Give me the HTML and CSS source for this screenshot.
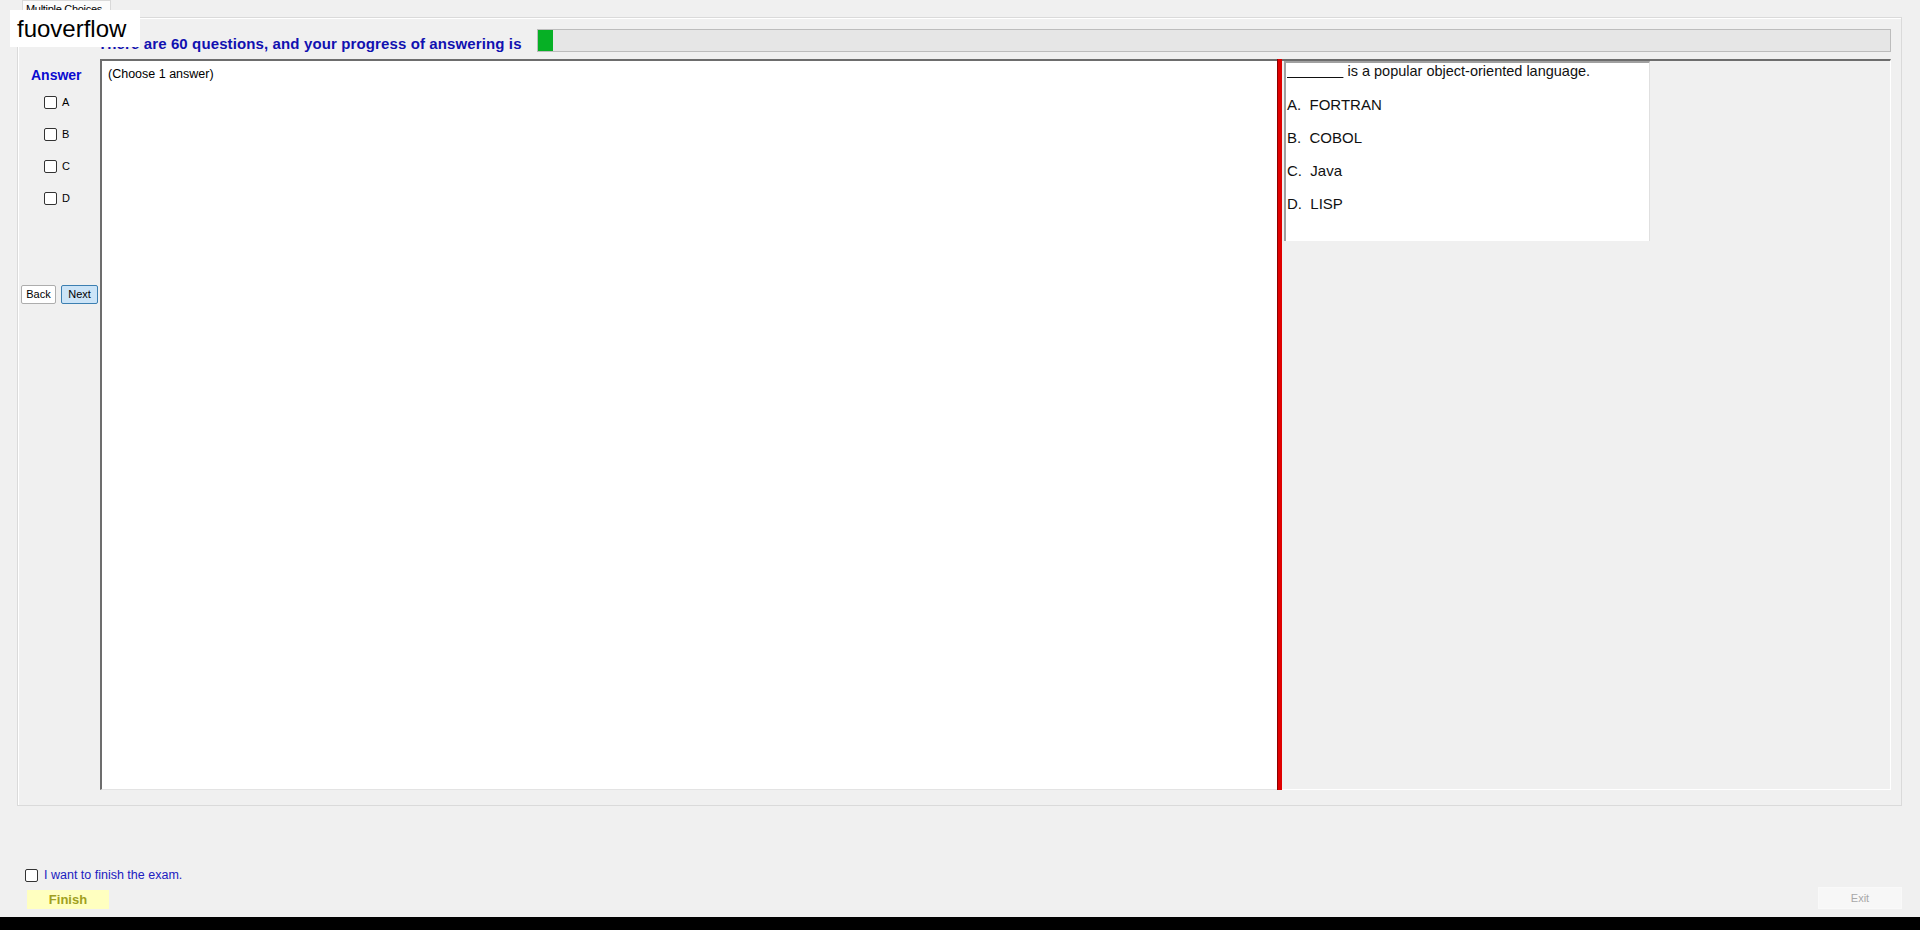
FILE: index.html
```html
<html>
<head>
<title>Multiple Choices</title>
<link rel="stylesheet" href="styles.css">
</head>
<body>
<div class="screen">
<div class="app">
  <div class="tabs"><span class="tab">Multiple Choices</span></div>
  <div class="tabpage">
    <div class="header">
      <div class="title">There are 60 questions, and your progress of answering is</div>
      <div class="progress"><div class="progress-fill" style="width:15px"></div></div>
    </div>
    <div class="body">
      <div class="answers">
        <div class="answer-label">Answer</div>
        <label class="opt"><span class="box"></span>A</label>
        <label class="opt"><span class="box"></span>B</label>
        <label class="opt"><span class="box"></span>C</label>
        <label class="opt"><span class="box"></span>D</label>
        <div class="nav">
          <span class="btn back">Back</span>
          <span class="btn next">Next</span>
        </div>
      </div>
      <div class="qpanel">(Choose 1 answer)</div>
      <div class="splitter"></div>
      <div class="rpanel">
        <div class="qbox">
          <p class="stem"><u>&nbsp;&nbsp;&nbsp;&nbsp;&nbsp;&nbsp;&nbsp;&nbsp;&nbsp;&nbsp;&nbsp;&nbsp;&nbsp;&nbsp;</u> is a popular object-oriented language.</p>
          <p>A.&nbsp; FORTRAN</p>
          <p>B.&nbsp; COBOL</p>
          <p>C.&nbsp; Java</p>
          <p>D.&nbsp; LISP</p>
        </div>
      </div>
    </div>
  </div>
  <div class="footer">
    <div class="finish-col">
      <label class="finish-check"><span class="box"></span>I want to finish the exam.</label>
      <span class="finish">Finish</span>
    </div>
    <span class="exit">Exit</span>
  </div>
  <div class="logo">fuoverflow</div>
</div>
<div class="taskbar"></div>
</div>
</body>
</html>
```

FILE: styles.css
```css
body { margin:0; background:#f0f0f0; font-family:"Liberation Sans", Arial, sans-serif; color:#000; }
.screen { width:1920px; height:930px; display:flex; flex-direction:column; overflow:hidden; }
.app { height:917px; position:relative; display:flex; flex-direction:column; }
.taskbar { height:13px; background:#000; }

.tabs { height:17px; padding-left:22px; display:flex; }
.tab { font-size:11px; line-height:16px; padding:0 3px 0 3px; width:81px; border:1px solid #d9d9d9; border-bottom:none; background:#fbfbfb; color:#000; letter-spacing:-0.3px; }

.tabpage { margin-left:17px; width:1883px; height:776px; border:1px solid #dadada; box-shadow:inset 1px 1px 0 #fff; background:#f0f0f0; padding-top:11px; }
.header { display:flex; height:23px; }
.title { width:439px; padding-left:80px; font-size:15px; letter-spacing:0.12px; font-weight:bold; color:#1111b0; line-height:30px; white-space:nowrap; }
.progress { width:1352px; height:21px; border:1px solid #bcbcbc; background:#e6e6e6; }
.progress-fill { height:21px; background:#06b025; }

.body { display:flex; height:731px; margin-top:7px; }
.answers { width:82px; display:flex; flex-direction:column; }
.answer-label { font-size:14px; font-weight:bold; color:#0a0ad0; padding:8px 0 0 13px; height:18px; }
.opt { display:flex; align-items:center; height:32px; padding-left:26px; font-size:11px; gap:5px; }
.opt:first-of-type { margin-top:1px; }
.box { width:11px; height:11px; border:1px solid #333; border-radius:2px; background:#fff; display:inline-block; }
.nav { display:flex; gap:5px; padding-left:3px; margin-top:71px; }
.btn { font-size:11px; height:17px; line-height:17px; border:1px solid #adadad; background:#fff; text-align:center; border-radius:2px; }
.back { width:33px; }
.next { width:35px; background:#cce4f7; border-color:#3c7fb1; }

.qpanel { width:1169px; border-left:2px solid #6d6d6d; border-top:2px solid #6d6d6d; border-bottom:1px solid #e3e3e3; background:#fff; font-size:12.5px; padding:6px 0 0 6px; }
.splitter { width:4px; background:#e00000; border-left:1px solid #8a0000; }
.rpanel { width:606px; border-top:2px solid #6d6d6d; border-right:1px solid #fff; border-bottom:1px solid #fff; padding:0 0 0 2px; }
.qbox { width:362px; height:178px; background:#fff; border-top:2px solid #a0a0a0; border-left:2px solid #a0a0a0; border-right:1px solid #e0e0e0; padding-left:1px; }
.qbox p { margin:0; font-size:15px; line-height:33px; height:33px; color:#111; white-space:nowrap; }
.qbox p.stem { font-size:14.5px; line-height:17px; height:25px; }
.qbox u { text-decoration-thickness:1px; }

.footer { flex:1; display:flex; justify-content:space-between; align-items:flex-end; padding:0 18px 8px 25px; }
.finish-col { display:flex; flex-direction:column; gap:8px; }
.finish-check { display:flex; align-items:center; gap:6px; font-size:12.5px; color:#2020c0; }
.finish { width:82px; height:19px; line-height:19px; margin-left:2px; background:#ffffc0; color:#a0a020; font-weight:bold; font-size:13px; text-align:center; }
.exit { width:82px; height:20px; line-height:20px; background:#f7f7f7; border:1px solid #f9f9f9; color:#a8a8a8; font-size:11px; text-align:center; }

.logo { position:absolute; left:10px; top:10px; width:123px; height:37px; padding-left:7px; background:#fff; font-size:24px; line-height:37px; color:#000; }
```
